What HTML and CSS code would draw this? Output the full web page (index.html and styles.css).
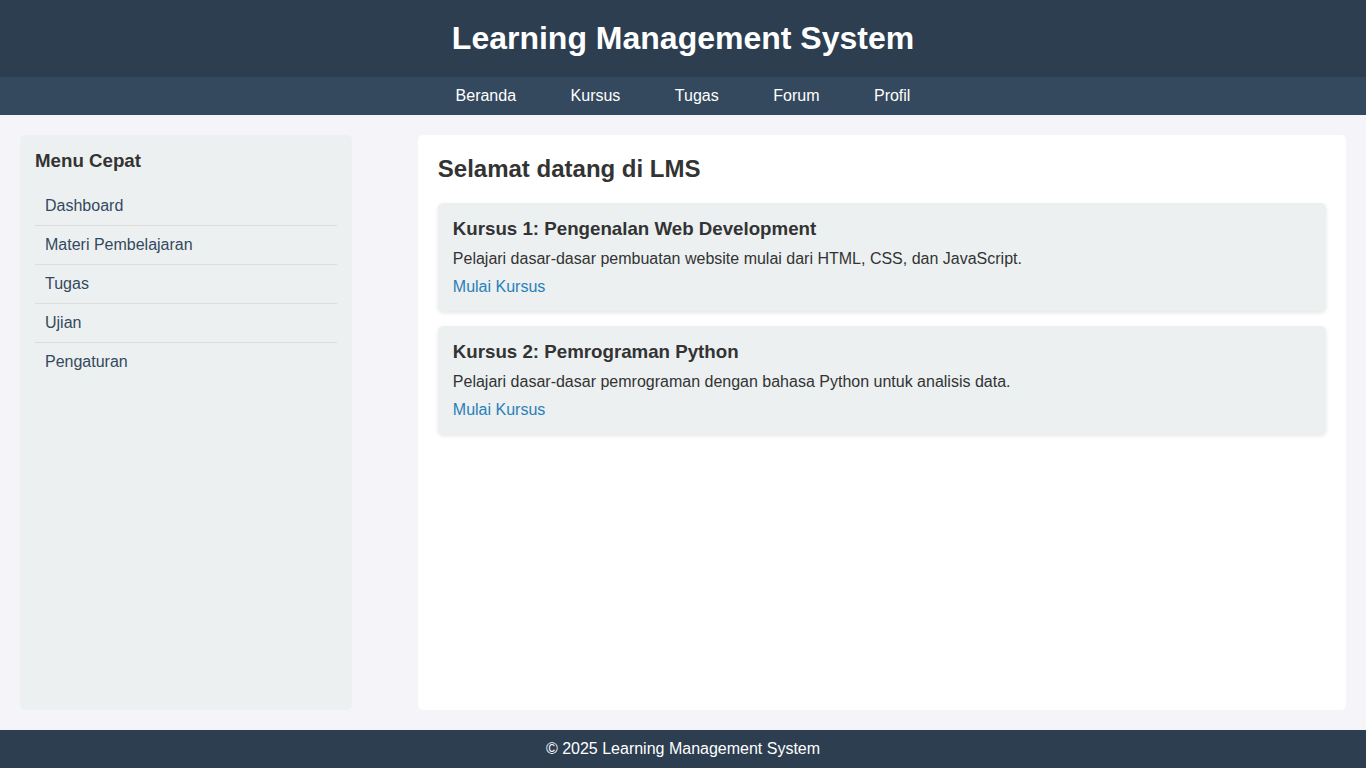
FILE: index.html
```html
<!DOCTYPE html>
<html lang="id">
<head>
<meta charset="utf-8">
<title>Learning Management System</title>
<link rel="stylesheet" href="styles.css">
</head>
<body>
<header class="header">
  <h1>Learning Management System</h1>
</header>
<nav class="nav">
  <a href="#">Beranda</a>
  <a href="#">Kursus</a>
  <a href="#">Tugas</a>
  <a href="#">Forum</a>
  <a href="#">Profil</a>
</nav>
<div class="container">
  <aside class="sidebar">
    <h3>Menu Cepat</h3>
    <ul>
      <li><a href="#">Dashboard</a></li>
      <li><a href="#">Materi Pembelajaran</a></li>
      <li><a href="#">Tugas</a></li>
      <li><a href="#">Ujian</a></li>
      <li><a href="#">Pengaturan</a></li>
    </ul>
  </aside>
  <main class="main">
    <h2>Selamat datang di LMS</h2>
    <div class="card">
      <h3>Kursus 1: Pengenalan Web Development</h3>
      <p>Pelajari dasar-dasar pembuatan website mulai dari HTML, CSS, dan JavaScript.</p>
      <a href="#">Mulai Kursus</a>
    </div>
    <div class="card">
      <h3>Kursus 2: Pemrograman Python</h3>
      <p>Pelajari dasar-dasar pemrograman dengan bahasa Python untuk analisis data.</p>
      <a href="#">Mulai Kursus</a>
    </div>
  </main>
</div>
<footer class="footer">&copy; 2025 Learning Management System</footer>
</body>
</html>
```
FILE: styles.css
```css
* { box-sizing: border-box; }
html, body { margin: 0; padding: 0; }
body {
  font-family: "Liberation Sans", Arial, sans-serif;
  font-size: 16px;
  color: #333;
  background: #f4f4f9;
  min-height: 100vh;
  display: flex;
  flex-direction: column;
}
.header {
  background: #2c3e50;
  color: #fff;
  text-align: center;
  padding: 20px;
}
.header h1 { margin: 0; font-size: 32px; }
.nav {
  background: #34495e;
  padding: 10px;
  display: flex;
  justify-content: center;
  gap: 54.5px;
}
.nav a { color: #fff; text-decoration: none; }
.container {
  flex: 1;
  display: flex;
  justify-content: space-between;
  padding: 20px;
}
.sidebar {
  width: 25%;
  background: #ecf0f1;
  padding: 15px;
  border-radius: 5px;
}
.sidebar h3 { margin: 0 0 15px; font-size: 18.72px; }
.sidebar ul { list-style: none; margin: 0; padding: 0; }
.sidebar li { border-bottom: 1px solid #ddd; }
.sidebar li:last-child { border-bottom: none; }
.sidebar a {
  display: block;
  padding: 10px;
  color: #34495e;
  text-decoration: none;
}
.main {
  width: 70%;
  background: #fff;
  padding: 20px;
  border-radius: 5px;
}
.main h2 { margin: 0 0 20px; font-size: 24px; }
.card {
  background: #ecf0f1;
  padding: 15px;
  border-radius: 5px;
  margin-bottom: 15px;
  box-shadow: 0 2px 4px rgba(0,0,0,0.1);
}
.card h3 { margin: 0 0 10px; font-size: 18.72px; }
.card p { margin: 0 0 10px; }
.card a { color: #2980b9; text-decoration: none; }
.footer {
  background: #2c3e50;
  color: #fff;
  text-align: center;
  padding: 10px;
}
```
